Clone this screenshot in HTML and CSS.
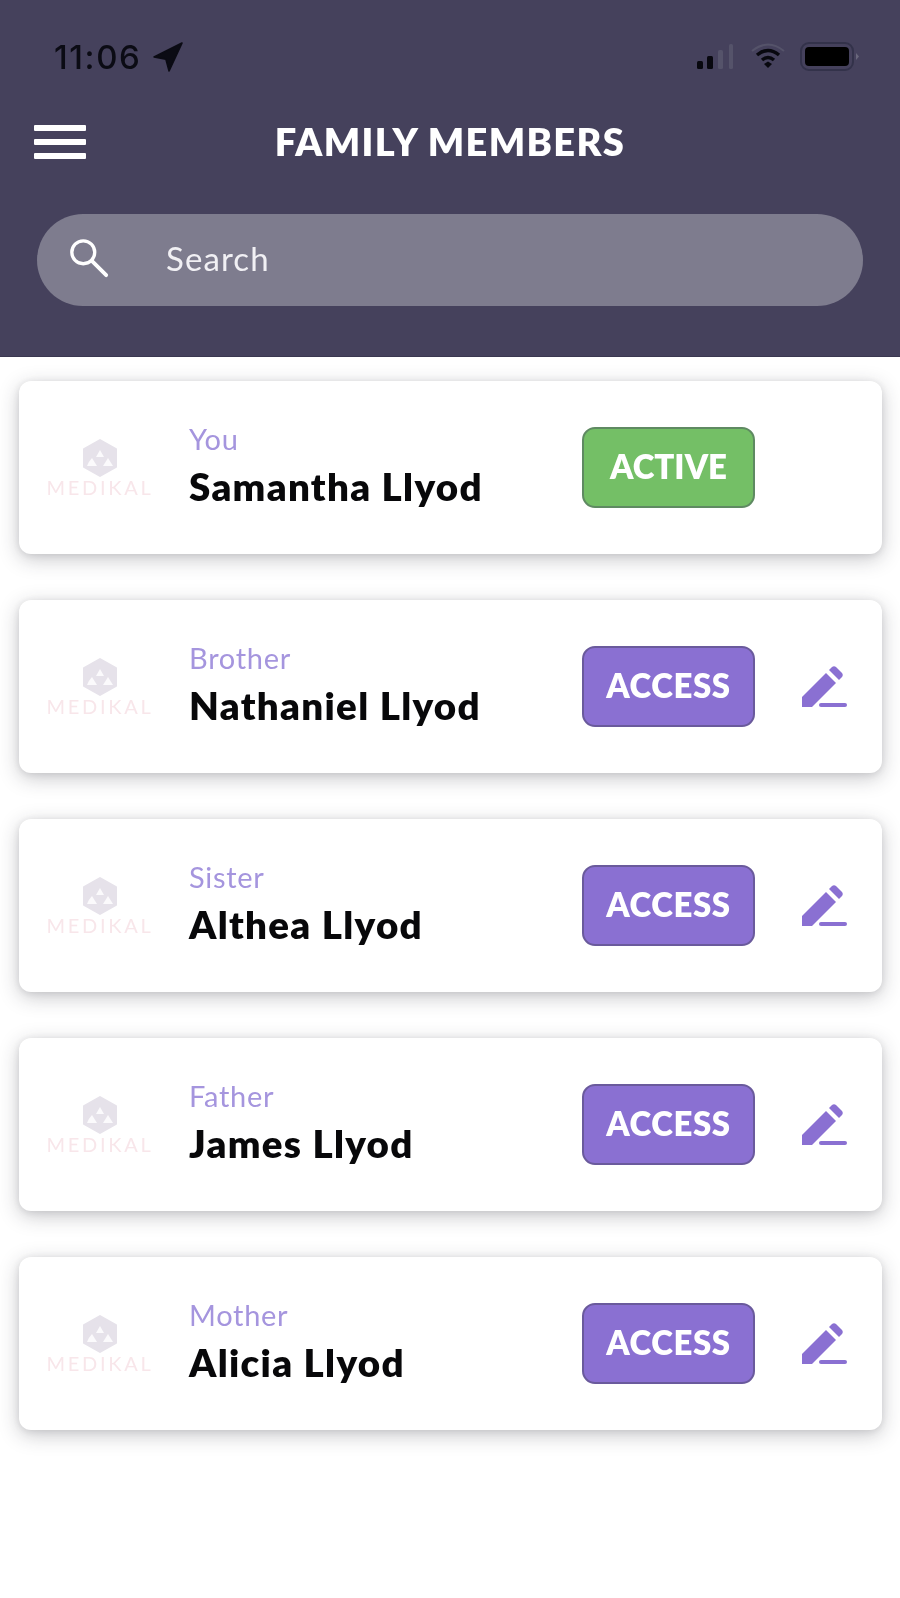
FILE: index.html
```html
<!DOCTYPE html>
<html lang="en">
<head>
<meta charset="utf-8">
<title>Family Members</title>
<link rel="stylesheet" href="styles.css">
</head>
<body>
<svg class="defs" width="0" height="0" aria-hidden="true">
  <symbol id="hex" viewBox="0 0 36 38">
    <path d="M18 1 L34 10 V28 L18 37 L2 28 V10 Z" fill="#e6e2ea" stroke="#e6e2ea" stroke-width="2" stroke-linejoin="round"/>
    <path d="M18 11 L22 18 H14 Z M10 19 L15 27 H5 Q7 22 10 19 Z M26 19 L31 27 H21 Z" fill="#fbfafc"/>
  </symbol>
  <symbol id="pencil" viewBox="0 0 46 42">
    <path d="M1 41 V31 L25 7 L35 17 L11 41 Z" fill="#8a70d2"/>
    <path d="M28 4 L31 1 Q33 -0.5 35 1 L41 7 Q42.500 9 41 11 L38 14 Z" fill="#8a70d2"/>
    <rect x="18" y="37" width="28" height="4" rx="2" fill="#8a70d2"/>
  </symbol>
</svg>
<main class="screen">
  <header class="top">
    <div class="status">
      <div class="time">
        <span>11:06</span>
        <svg width="30" height="30" viewBox="0 0 28 28"><path d="M27 1 L1 14 L12 16 L15 27 Z" fill="#0b0b14" stroke="#0b0b14" stroke-width="1.500" stroke-linejoin="round"/></svg>
      </div>
      <div class="indicators">
        <svg width="40" height="28" viewBox="0 0 40 28"><rect x="1" y="18" width="6" height="8" rx="1.500" fill="#08080f"/><rect x="11" y="13" width="6" height="13" rx="1.500" fill="#08080f"/><rect x="22" y="7" width="5" height="19" rx="1.500" fill="#55536a"/><rect x="33" y="1" width="4" height="25" rx="1.500" fill="#55536a"/></svg>
        <svg width="36" height="28" viewBox="0 0 36 28"><path d="M2 8 Q18 -5 34 8" fill="none" stroke="#55536a" stroke-width="2"/><path d="M7 12 Q18 3 29 12" fill="none" stroke="#08080f" stroke-width="3.500"/><path d="M12 17 Q18 12 24 17" fill="none" stroke="#08080f" stroke-width="3.500"/><path d="M14 21 L18 18.500 L22 21 L18 25 Z" fill="#08080f"/></svg>
        <svg width="60" height="30" viewBox="0 0 60 30"><rect x="1" y="1" width="52" height="27" rx="8" fill="none" stroke="#33324a" stroke-width="2"/><rect x="5" y="5" width="44" height="19" rx="4" fill="#000"/><path d="M56 11 L59 14.500 L56 18 Z" fill="#6a687c"/></svg>
      </div>
    </div>
    <div class="titlebar">
      <div class="menu"><i></i><i></i><i></i></div>
      <h1>FAMILY MEMBERS</h1>
    </div>
    <div class="search">
      <svg width="42" height="42" viewBox="0 0 44 44"><circle cx="16" cy="16" r="12" fill="none" stroke="#fff" stroke-width="3.500"/><path d="M25 25 L40 40" stroke="#fff" stroke-width="4" stroke-linecap="round"/></svg>
      <span>Search</span>
    </div>
  </header>
  <section class="list">
    <article class="card">
      <div class="logo"><svg class="hex"><use href="#hex"/></svg><span>MEDIKAL</span></div>
      <div class="who"><span class="rel">You</span><strong>Samantha Llyod</strong></div>
      <button class="btn active">ACTIVE</button>
    </article>
    <article class="card">
      <div class="logo"><svg class="hex"><use href="#hex"/></svg><span>MEDIKAL</span></div>
      <div class="who"><span class="rel">Brother</span><strong>Nathaniel Llyod</strong></div>
      <button class="btn">ACCESS</button>
      <svg class="edit"><use href="#pencil"/></svg>
    </article>
    <article class="card">
      <div class="logo"><svg class="hex"><use href="#hex"/></svg><span>MEDIKAL</span></div>
      <div class="who"><span class="rel">Sister</span><strong>Althea Llyod</strong></div>
      <button class="btn">ACCESS</button>
      <svg class="edit"><use href="#pencil"/></svg>
    </article>
    <article class="card">
      <div class="logo"><svg class="hex"><use href="#hex"/></svg><span>MEDIKAL</span></div>
      <div class="who"><span class="rel">Father</span><strong>James Llyod</strong></div>
      <button class="btn">ACCESS</button>
      <svg class="edit"><use href="#pencil"/></svg>
    </article>
    <article class="card">
      <div class="logo"><svg class="hex"><use href="#hex"/></svg><span>MEDIKAL</span></div>
      <div class="who"><span class="rel">Mother</span><strong>Alicia Llyod</strong></div>
      <button class="btn">ACCESS</button>
      <svg class="edit"><use href="#pencil"/></svg>
    </article>
  </section>
</main>
</body>
</html>
```
FILE: styles.css
```css
* { box-sizing: border-box; }
html, body { margin: 0; padding: 0; background: #fff; }
body { font-family: Lato, "Open Sans", sans-serif; }
.defs { position: absolute; }
.screen { width: 900px; height: 1598px; overflow: hidden; background: #fff; filter: blur(0.6px); }

.top { height: 357px; background: #45415c; padding-top: 36px; border-bottom: 1px solid #3a3750; }
.status { display: flex; justify-content: space-between; align-items: center; height: 42px; padding: 0 40px 0 54px; }
.time { display: flex; align-items: center; gap: 11px; font-family: Inter, sans-serif; font-size: 33px; font-weight: 500; line-height: 42px; color: #0b0b14; letter-spacing: 1.6px; }
.indicators { display: flex; align-items: center; gap: 14px; }

.titlebar { position: relative; display: flex; justify-content: center; align-items: center; height: 40px; margin-top: 43px; }
.titlebar h1 { margin: 0; font-size: 38px; line-height: 40px; font-weight: 800; letter-spacing: 1.35px; color: #fff; }
.menu { position: absolute; left: 34px; top: 4px; width: 52px; display: flex; flex-direction: column; gap: 8px; }
.menu i { display: block; height: 6px; background: #fff; border-radius: 1px; }

.search { display: flex; align-items: center; height: 92px; margin: 53px 37px 0; padding: 0 0 4px 31px; border-radius: 46px; background: #7e7c8e; color: #f1f0f4; font-size: 33px; letter-spacing: 1.1px; }
.search span { margin-left: 56px; }

.list { display: flex; flex-direction: column; gap: 46px; padding: 24px 18px 0 19px; }
.card { display: flex; align-items: center; height: 173px; background: #fff; border-radius: 12px; box-shadow: 0 5px 20px rgba(40, 40, 50, 0.26), 0 1px 6px rgba(40, 40, 50, 0.1); }
.logo { width: 104px; margin-left: 29px; padding-top: 3px; flex: none; display: flex; flex-direction: column; align-items: center; }
.hex { width: 36px; height: 38px; }
.logo span { font-size: 20px; line-height: 24px; letter-spacing: 2.7px; color: #f8e6ea; white-space: nowrap; margin-top: -2px; }
.who { width: 393px; margin-left: 37px; padding-bottom: 6px; display: flex; flex-direction: column; flex: none; }
.rel { font-size: 29px; line-height: 34px; letter-spacing: 0.7px; color: #a595de; }
.who strong { margin-top: 8px; font-size: 38.500px; line-height: 44px; font-weight: 800; letter-spacing: 1.3px; color: #08080a; }
.btn { width: 173px; height: 81px; flex: none; border: 2px solid #6a5a9c; border-radius: 13px; background: #8a70d2; color: #fff; font: 800 33px Lato, sans-serif; letter-spacing: 0.6px; padding: 0 0 4px; }
.btn.active { background: #74bf66; border-color: #5f8a62; letter-spacing: 0; }
.edit { width: 46px; height: 42px; margin-left: 46px; flex: none; }
```
